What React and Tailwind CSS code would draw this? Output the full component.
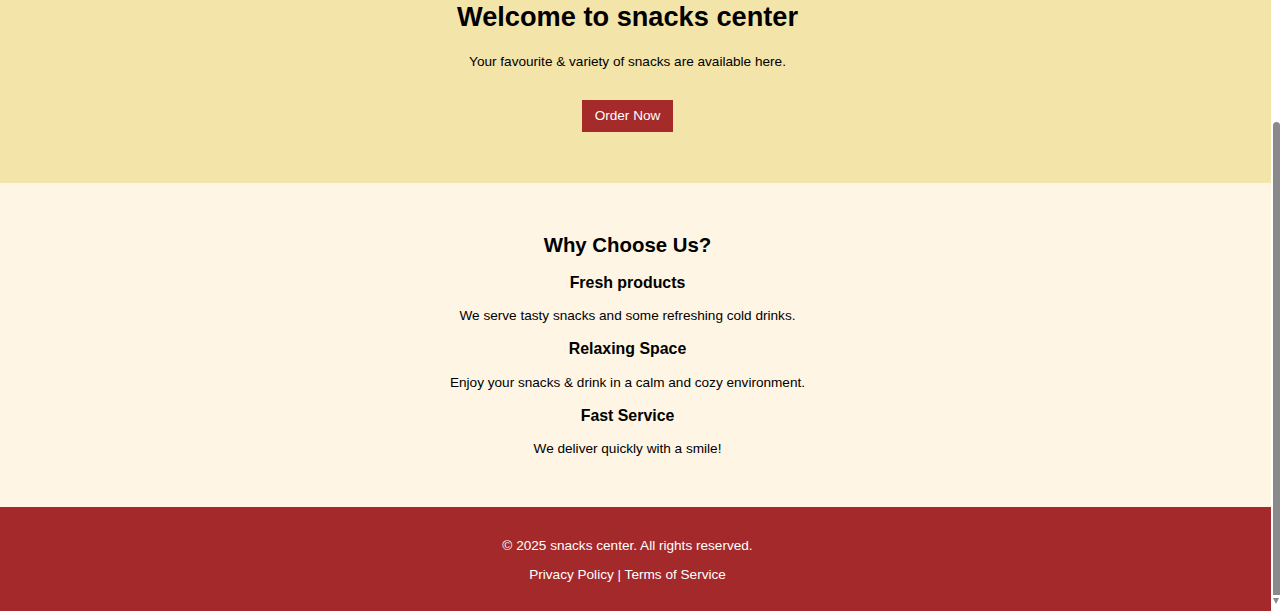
import React from 'react';

const features = [
  { title: 'Fresh products', text: 'We serve tasty snacks and some refreshing cold drinks.', mt: 'mt-[17px]', pmt: 'mt-[16px]' },
  { title: 'Relaxing Space', text: 'Enjoy your snacks & drink in a calm and cozy environment.', mt: 'mt-[16px]', pmt: 'mt-[17px]' },
  { title: 'Fast Service', text: 'We deliver quickly with a smile!', mt: 'mt-[16px]', pmt: 'mt-[16px]' },
];

export default function App() {
  return (
    <div className="flex h-[611px] overflow-hidden bg-white text-black font-['Liberation_Sans',Arial,sans-serif]">
      <div className="flex flex-1 flex-col">
        {/* Hero */}
        <section className="bg-[#f3e4aa] pt-[1px] pb-[51px] pr-[16px] text-center">
          <h1 className="text-[27.2px] leading-[31px] font-bold">Welcome to snacks center</h1>
          <p className="mt-[22px] text-[13.6px] leading-[16px]">Your favourite &amp; variety of snacks are available here.</p>
          <button className="mt-[30px] h-[32px] px-[13px] bg-[#a52a2a] text-[13.6px] leading-[16px] text-white">
            Order Now
          </button>
        </section>

        {/* Why choose us */}
        <section className="bg-[#fef5e4] pt-[50px] pb-[50px] pr-[16px] text-center">
          <h2 className="text-[20.4px] leading-[24px] font-bold">Why Choose Us?</h2>
          {features.map((f) => (
            <div key={f.title}>
              <h3 className={`${f.mt} text-[15.9px] leading-[18px] font-bold`}>{f.title}</h3>
              <p className={`${f.pmt} text-[13.6px] leading-[16px]`}>{f.text}</p>
            </div>
          ))}
        </section>

        {/* Footer */}
        <footer className="flex-1 bg-[#a4292a] pt-[31px] pr-[16px] text-center text-[13.6px] leading-[16px] text-white">
          <p>© 2025 snacks center. All rights reserved.</p>
          <p className="mt-[13px]">
            <a href="#">Privacy Policy</a> | <a href="#">Terms of Service</a>
          </p>
        </footer>
      </div>

      {/* scrollbar */}
      <div className="flex w-[9px] flex-col bg-white">
        <div className="mt-[122px] ml-[2px] h-[473px] rounded-t-[4px] bg-[#8a8a8a]" />
        <div className="mt-[3px] ml-[2px] h-0 w-0 border-x-[3.5px] border-t-[6px] border-x-transparent border-t-[#8a8a8a]" />
      </div>
    </div>
  );
}
